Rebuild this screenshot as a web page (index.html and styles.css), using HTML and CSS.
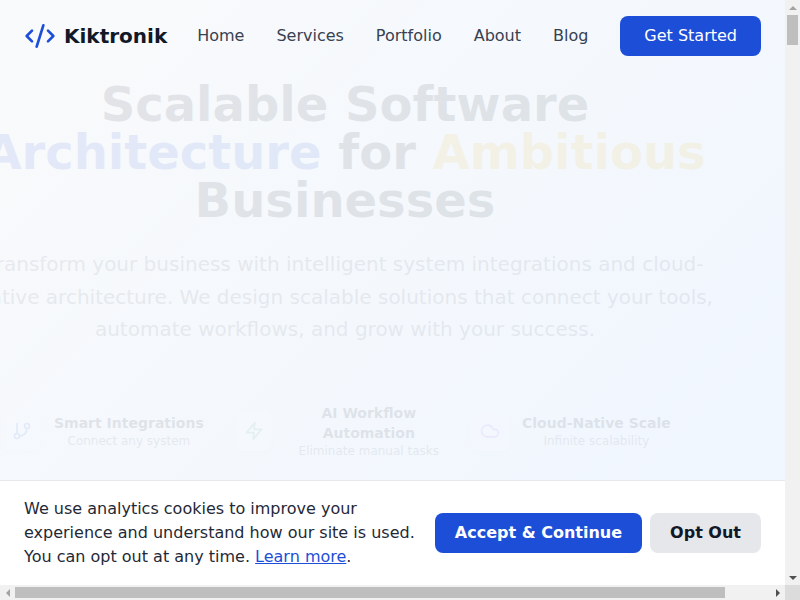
FILE: index.html
```html
<!DOCTYPE html>
<html lang="en">
<head>
    <meta charset="UTF-8">
    <meta name="viewport" content="width=device-width, initial-scale=1.0">
    <title>Kiktronik</title>
    <link rel="stylesheet" href="styles.css">
</head>
<body>
    <div class="window">
        <div class="view">
            <nav class="nav">
                <a class="logo" href="#">
                    <svg class="logo-icon" viewBox="0 0 24 24" fill="none" stroke="currentColor" stroke-width="2" stroke-linecap="round" stroke-linejoin="round">
                        <path d="m18 16 4-4-4-4"/>
                        <path d="m6 8-4 4 4 4"/>
                        <path d="m14.5 4-5 16"/>
                    </svg>
                    <span>Kiktronik</span>
                </a>
                <div class="nav-links">
                    <a href="#">Home</a>
                    <a href="#">Services</a>
                    <a href="#">Portfolio</a>
                    <a href="#">About</a>
                    <a href="#">Blog</a>
                </div>
                <a class="btn btn-primary" href="#">Get Started</a>
            </nav>

            <section class="hero">
                <h1>Scalable Software <span class="blue">Architecture</span> for <span class="amber">Ambitious</span> Businesses</h1>
                <p>Transform your business with intelligent system integrations and cloud-native architecture. We design scalable solutions that connect your tools, automate workflows, and grow with your success.</p>
            </section>

            <div class="features">
                <div class="feature">
                    <div class="feature-icon icon-blue">
                        <svg viewBox="0 0 24 24" fill="none" stroke="currentColor" stroke-width="2" stroke-linecap="round" stroke-linejoin="round">
                            <circle cx="18" cy="6" r="3"/>
                            <circle cx="6" cy="18" r="3"/>
                            <path d="M6 15V3"/>
                            <path d="M18 9a9 9 0 0 1-9 9"/>
                        </svg>
                    </div>
                    <div class="feature-text">
                        <div class="feature-title">Smart Integrations</div>
                        <div class="feature-sub">Connect any system</div>
                    </div>
                </div>
                <div class="feature">
                    <div class="feature-icon icon-green">
                        <svg viewBox="0 0 24 24" fill="none" stroke="currentColor" stroke-width="2" stroke-linecap="round" stroke-linejoin="round">
                            <path d="M13 2 3 14h9l-1 8 10-12h-9z"/>
                        </svg>
                    </div>
                    <div class="feature-text">
                        <div class="feature-title">AI Workflow Automation</div>
                        <div class="feature-sub">Eliminate manual tasks</div>
                    </div>
                </div>
                <div class="feature">
                    <div class="feature-icon icon-purple">
                        <svg viewBox="0 0 24 24" fill="none" stroke="currentColor" stroke-width="2" stroke-linecap="round" stroke-linejoin="round">
                            <path d="M17.5 19H9a7 7 0 1 1 6.71-9h1.79a4.5 4.5 0 1 1 0 9z"/>
                        </svg>
                    </div>
                    <div class="feature-text">
                        <div class="feature-title">Cloud-Native Scale</div>
                        <div class="feature-sub">Infinite scalability</div>
                    </div>
                </div>
            </div>

            <div class="cookie">
                <p class="cookie-text">We use analytics cookies to improve your experience and understand how our site is used. You can opt out at any time. <a href="#">Learn more</a>.</p>
                <div class="cookie-actions">
                    <button class="btn btn-primary btn-bold">Accept &amp; Continue</button>
                    <button class="btn btn-gray btn-bold">Opt Out</button>
                </div>
            </div>
        </div>

        <div class="scrollbar scrollbar-v">
            <span class="arrow arrow-up"></span>
            <span class="thumb"></span>
            <span class="arrow arrow-down"></span>
        </div>
        <div class="scrollbar scrollbar-h">
            <span class="arrow arrow-left"></span>
            <span class="thumb"></span>
            <span class="arrow arrow-right"></span>
        </div>
        <div class="corner"></div>
    </div>
</body>
</html>
```

FILE: styles.css
```css
body {
    font-family: "DejaVu Sans", sans-serif;
    margin: 0;
    color: #111827;
}
a {
    text-decoration: none;
    color: inherit;
}
.window {
    display: grid;
    grid-template-columns: 785px 15px;
    grid-template-rows: 585px 15px;
    height: 600px;
    overflow: hidden;
}
.view {
    position: relative;
    overflow: hidden;
    background: linear-gradient(135deg, #f9fafb, #eff6ff);
}
.nav {
    display: flex;
    align-items: center;
    justify-content: space-between;
    padding: 16px 24px;
}
.logo {
    display: flex;
    align-items: center;
    gap: 8px;
    font-size: 20px;
    font-weight: bold;
}
.logo-icon {
    width: 32px;
    height: 32px;
    color: #1d4ed8;
}
.nav-links {
    display: flex;
    gap: 32px;
    margin-right: 2px;
    color: #374151;
    line-height: 24px;
}
.btn {
    display: block;
    padding: 8px 24px;
    border: none;
    border-radius: 8px;
    font-family: inherit;
    font-size: 16px;
    line-height: 24px;
}
.btn-primary {
    background: #1d4ed8;
    color: white;
}
.btn-gray {
    background: #e5e7eb;
    color: #111827;
}
.btn-bold {
    font-weight: bold;
    padding: 8px 20px;
}
.hero {
    width: 750px;
    margin: 8px 0 0 -30px;
    text-align: center;
    opacity: 0.09;
}
.hero h1 {
    margin: 0 0 24px;
    font-size: 48px;
    line-height: 48px;
}
.blue {
    color: #1d4ed8;
}
.amber {
    color: #eab308;
}
.hero p {
    margin: 0;
    font-size: 20px;
    line-height: 32.5px;
    color: #4b5563;
}
.features {
    display: grid;
    grid-template-columns: repeat(3, 218px);
    gap: 16px;
    margin: 57px 0 0 2px;
    opacity: 0.09;
}
.feature {
    display: flex;
    align-items: center;
    gap: 12px;
}
.feature-icon {
    display: flex;
    align-items: center;
    justify-content: center;
    width: 40px;
    height: 40px;
    border-radius: 8px;
    background: white;
    box-shadow: 0 1px 2px rgba(0,0,0,0.05);
}
.feature-icon svg {
    width: 20px;
    height: 20px;
}
.icon-blue {
    color: #2563eb;
}
.icon-green {
    color: #4f9d76;
}
.icon-purple {
    color: #a855f7;
}
.feature-text {
    text-align: center;
}
.feature-title {
    font-size: 14px;
    line-height: 20px;
    font-weight: bold;
}
.feature-sub {
    font-size: 12px;
    line-height: 16px;
    color: #4b5563;
}
.cookie {
    position: absolute;
    left: 0;
    right: 0;
    bottom: 0;
    display: flex;
    align-items: center;
    gap: 16px;
    padding: 16px 24px;
    background: white;
    border-top: 1px solid #e5e7eb;
}
.cookie-text {
    flex: 1;
    margin: 0;
    line-height: 24px;
    color: #1f2937;
}
.cookie-text a {
    color: #1d4ed8;
    text-decoration: underline;
}
.cookie-actions {
    display: flex;
    gap: 8px;
}

/* scrollbars of the window */
.scrollbar {
    display: flex;
    background: #f1f1f1;
}
.scrollbar-v {
    flex-direction: column;
    align-items: center;
}
.scrollbar-h {
    align-items: center;
}
.scrollbar-v .thumb {
    width: 11px;
    height: 30px;
    margin-bottom: auto;
    background: #bebebe;
}
.scrollbar-h .thumb {
    width: 710px;
    height: 11px;
    margin-right: auto;
    background: #bebebe;
}
.corner {
    background: #dcdcdc;
}
.arrow {
    display: flex;
    flex: none;
    align-items: center;
    justify-content: center;
    width: 15px;
    height: 15px;
}
.arrow::before {
    content: "";
    border: 4px solid transparent;
}
.arrow-up::before {
    border-top: 0;
    border-bottom-color: #a3a3a3;
}
.arrow-down::before {
    border-bottom: 0;
    border-top-color: #505050;
}
.arrow-left::before {
    border-left: 0;
    border-right-color: #a3a3a3;
}
.arrow-right::before {
    border-right: 0;
    border-left-color: #505050;
}
```
